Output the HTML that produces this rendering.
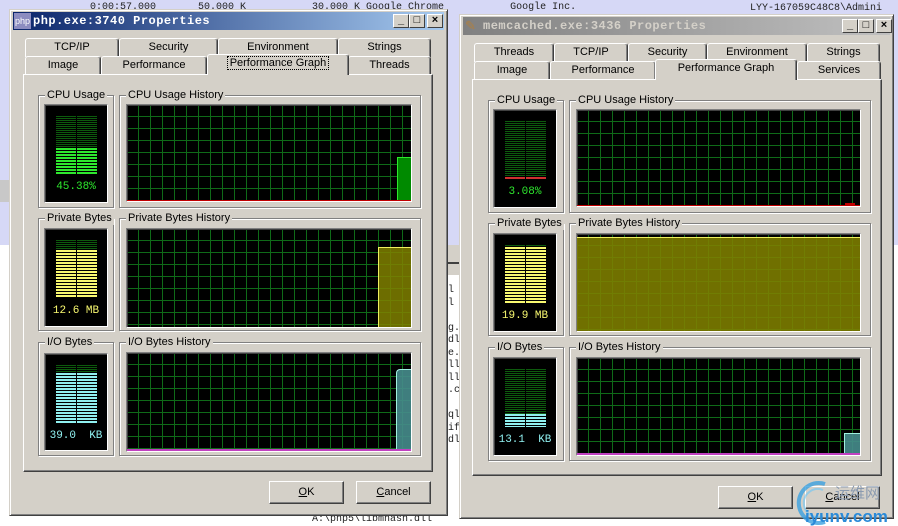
<!DOCTYPE html>
<html><head><meta charset="utf-8">
<style>
*{box-sizing:border-box;margin:0;padding:0}
body{width:898px;height:526px;position:relative;overflow:hidden;background:#fff;font-family:"Liberation Sans",sans-serif;font-size:11px;color:#000}
.a{position:absolute}
.win{position:absolute;background:#d4d0c8;border:1px solid;border-color:#d4d0c8 #404040 #404040 #d4d0c8;box-shadow:inset 1px 1px #fff,inset -1px -1px #808080}
.title{position:absolute;height:18px;color:#fff;font-family:"Liberation Mono",monospace;font-weight:bold;font-size:12px;line-height:18px;padding-left:20px;letter-spacing:0.5px}
.cb{position:absolute;top:2px;width:16px;height:14px;background:#d4d0c8;border:1px solid;border-color:#fff #404040 #404040 #fff;color:#000;font-size:11px;line-height:11px;text-align:center;font-family:"Liberation Sans",sans-serif;font-weight:bold}
.tab{position:absolute;height:19px;border:1px solid;border-bottom:none;border-color:#fff #404040 #fff #fff;box-shadow:inset -1px 0 #808080;border-radius:3px 3px 0 0;text-align:center;line-height:17px;background:#d4d0c8}
.panel{position:absolute;border:1px solid;border-color:#fff #404040 #404040 #fff;box-shadow:inset -1px -1px #808080}
.grp{position:absolute;border:1px solid #808080;box-shadow:1px 1px #fff,inset 1px 1px #fff}
.lg{position:absolute;top:-8px;left:6px;background:#d4d0c8;padding:0 2px;line-height:14px;white-space:nowrap}
.graph{position:absolute;background-color:#000;background-image:linear-gradient(#0f6a18 1px,transparent 1px),linear-gradient(90deg,#0f6a18 1px,transparent 1px);background-size:12px 12px;background-position:-1px -1px;border:1px solid;border-color:#808080 #fff #fff #808080;box-shadow:inset 1px 1px #404040;overflow:hidden}
.meter{position:absolute;background:#000;border:1px solid;border-color:#808080 #fff #fff #808080;box-shadow:inset 1px 1px #404040;overflow:hidden}
.bars{position:absolute;left:11px;top:11px;width:41px;height:58px;background:repeating-linear-gradient(#0d5a0d 0 1px,#000 1px 2px)}
.fill{position:absolute;left:0;right:0;bottom:0}
.div{position:absolute;left:20px;top:0;bottom:0;width:1px;background:#000}
.mt{position:absolute;left:0;right:0;top:76px;text-align:center;font-family:"Liberation Mono",monospace;font-size:11px}
.btn{position:absolute;height:23px;border:1px solid;border-color:#fff #404040 #404040 #fff;box-shadow:inset -1px -1px #808080;text-align:center;line-height:20px;background:#d4d0c8}
.hf{position:absolute;bottom:0}
.bg{position:absolute;font-family:"Liberation Mono",monospace;font-size:10px;color:#222}
</style></head><body>

<div class="a" style="left:0;top:0;width:898px;height:245px;background:#d6d8f6"></div>
<div class="a" style="left:0;top:180px;width:10px;height:22px;background:#c8c8c8"></div>
<div class="a" style="left:447px;top:245px;width:14px;height:30px;background:#d4d0c8"></div>
<div class="a" style="left:447px;top:262px;width:14px;height:2px;background:#404040"></div>
<div class="bg" style="left:90px;top:2px">0:00:57.000 &nbsp;&nbsp;&nbsp;&nbsp;&nbsp;&nbsp;50.000 K &nbsp;&nbsp;&nbsp;&nbsp;&nbsp;&nbsp;&nbsp;&nbsp;&nbsp;&nbsp;30.000 K Google Chrome &nbsp;&nbsp;&nbsp;&nbsp;&nbsp;&nbsp;&nbsp;&nbsp;&nbsp;&nbsp;Google Inc.</div>
<div class="bg" style="left:750px;top:3px">LYY-167059C48C8\Admini</div>
<div class="bg" style="left:448px;top:285px;line-height:12.5px">l<br>l<br><br>g.<br>dl<br>e.<br>ll<br>ll<br>.c<br><br>ql<br>if<br>dl</div>
<div class="bg" style="left:312px;top:514px">A:\php5\libmhash.dll</div>

<div class="win" style="left:9px;top:9px;width:439px;height:507px"></div>
<div class="title" style="left:13px;top:12px;width:431px;background:linear-gradient(90deg,#0a246a,#a6caf0)">php.exe:3740 Properties</div>
<div class="a" style="left:14px;top:13px;width:17px;height:16px;background:#8c8cc0;color:#fff;font-size:9px;line-height:16px;text-align:center">php</div>
<div class="cb" style="left:393px;top:14px">_</div>
<div class="cb" style="left:409px;top:14px">□</div>
<div class="cb" style="left:427px;top:14px">×</div>

<div class="tab" style="left:25px;top:38px;width:94px">TCP/IP</div>
<div class="tab" style="left:119px;top:38px;width:99px">Security</div>
<div class="tab" style="left:218px;top:38px;width:120px">Environment</div>
<div class="tab" style="left:338px;top:38px;width:93px">Strings</div>
<div class="tab" style="left:25px;top:56px;width:76px">Image</div>
<div class="tab" style="left:101px;top:56px;width:106px">Performance</div>
<div class="tab" style="left:348px;top:56px;width:83px">Threads</div>
<div class="panel" style="left:23px;top:74px;width:410px;height:398px"></div>
<div class="tab" style="left:207px;top:54px;width:142px;height:21px;z-index:2;border-bottom:none"><span style="outline:1px dotted #000;padding:0 2px">Performance Graph</span></div>

<div class="grp" style="left:38px;top:95px;width:76px;height:113px"><span class="lg">CPU Usage</span></div>
<div class="grp" style="left:119px;top:95px;width:302px;height:113px"><span class="lg">CPU Usage History</span></div>
<div class="meter" style="left:44px;top:104px;width:64px;height:99px"><div class="bars"><div class="fill" style="height:26px;background:repeating-linear-gradient(#2ee82e 0 2px,#000 2px 3px)"></div><div class="div"></div></div><div class="mt" style="color:#2ee82e">45.38%</div></div>
<div class="graph" style="left:126px;top:104px;width:286px;height:98px"><div class="hf" style="left:270px;width:14px;height:44px;background:#008a00;border-left:1px solid #2ee82e;border-top:1px solid #2ee82e"></div><div class="hf" style="left:0;right:0;height:1px;background:#c00000"></div></div>

<div class="grp" style="left:38px;top:218px;width:76px;height:113px"><span class="lg">Private Bytes</span></div>
<div class="grp" style="left:119px;top:218px;width:302px;height:113px"><span class="lg">Private Bytes History</span></div>
<div class="meter" style="left:44px;top:228px;width:64px;height:99px"><div class="bars"><div class="fill" style="height:48px;background:repeating-linear-gradient(#f8f870 0 2px,#000 2px 3px)"></div><div class="div"></div></div><div class="mt" style="color:#f8f870">12.6 MB</div></div>
<div class="graph" style="left:126px;top:228px;width:286px;height:100px"><div class="hf" style="left:251px;width:33px;height:80px;background:rgba(128,128,0,.85);border-left:1px solid #f0f060;border-top:1px solid #f0f060"></div></div>

<div class="grp" style="left:38px;top:342px;width:76px;height:114px"><span class="lg">I/O Bytes</span></div>
<div class="grp" style="left:119px;top:342px;width:302px;height:114px"><span class="lg">I/O Bytes History</span></div>
<div class="meter" style="left:44px;top:353px;width:64px;height:98px"><div class="bars"><div class="fill" style="height:50px;background:repeating-linear-gradient(#90f0f0 0 2px,#000 2px 3px)"></div><div class="div"></div></div><div class="mt" style="color:#90f0f0">39.0 &nbsp;KB</div></div>
<div class="graph" style="left:126px;top:352px;width:286px;height:100px"><div class="hf" style="left:269px;width:15px;height:82px;background:rgba(70,140,140,.9);border-left:1px solid #a0f0e0;border-top:1px solid #a0f0e0;border-radius:4px 0 0 0"></div><div class="hf" style="left:0;right:0;height:2px;background:#c040c0"></div></div>

<div class="btn" style="left:269px;top:481px;width:75px"><u>O</u>K</div>
<div class="btn" style="left:356px;top:481px;width:75px"><u>C</u>ancel</div>

<div class="win" style="left:459px;top:14px;width:435px;height:505px"></div>
<div class="title" style="left:463px;top:17px;width:427px;background:linear-gradient(90deg,#808080,#c0c0c0);color:#d4d0c8">memcached.exe:3436 Properties</div>
<div class="a" style="left:465px;top:18px;width:14px;height:15px;color:#b08040;font-size:13px;line-height:15px">✎</div>
<div class="cb" style="left:842px;top:19px">_</div>
<div class="cb" style="left:858px;top:19px">□</div>
<div class="cb" style="left:876px;top:19px">×</div>

<div class="tab" style="left:474px;top:43px;width:80px">Threads</div>
<div class="tab" style="left:554px;top:43px;width:74px">TCP/IP</div>
<div class="tab" style="left:628px;top:43px;width:79px">Security</div>
<div class="tab" style="left:707px;top:43px;width:100px">Environment</div>
<div class="tab" style="left:807px;top:43px;width:73px">Strings</div>
<div class="tab" style="left:474px;top:61px;width:76px">Image</div>
<div class="tab" style="left:550px;top:61px;width:106px">Performance</div>
<div class="tab" style="left:797px;top:61px;width:84px">Services</div>
<div class="panel" style="left:472px;top:79px;width:410px;height:397px"></div>
<div class="tab" style="left:655px;top:59px;width:142px;height:21px;z-index:2">Performance Graph</div>

<div class="grp" style="left:488px;top:100px;width:76px;height:113px"><span class="lg">CPU Usage</span></div>
<div class="grp" style="left:569px;top:100px;width:302px;height:113px"><span class="lg">CPU Usage History</span></div>
<div class="meter" style="left:493px;top:109px;width:64px;height:99px"><div class="bars"><div class="fill" style="height:2px;background:#d03030"></div><div class="div"></div></div><div class="mt" style="color:#2ee82e">3.08%</div></div>
<div class="graph" style="left:576px;top:109px;width:285px;height:98px"><div class="hf" style="left:0;right:0;height:1px;background:#c00000"></div><div class="hf" style="left:268px;width:10px;height:3px;background:#c00000"></div></div>

<div class="grp" style="left:488px;top:223px;width:76px;height:113px"><span class="lg">Private Bytes</span></div>
<div class="grp" style="left:569px;top:223px;width:302px;height:113px"><span class="lg">Private Bytes History</span></div>
<div class="meter" style="left:493px;top:233px;width:64px;height:99px"><div class="bars"><div class="fill" style="height:56px;background:repeating-linear-gradient(#f8f870 0 2px,#000 2px 3px)"></div><div class="div"></div></div><div class="mt" style="color:#f8f870">19.9 MB</div></div>
<div class="graph" style="left:576px;top:233px;width:285px;height:99px"><div class="hf" style="left:0;right:0;height:94px;background:rgba(128,128,0,.88);border-top:1px solid #f0f060"></div></div>

<div class="grp" style="left:488px;top:347px;width:76px;height:114px"><span class="lg">I/O Bytes</span></div>
<div class="grp" style="left:569px;top:347px;width:302px;height:114px"><span class="lg">I/O Bytes History</span></div>
<div class="meter" style="left:493px;top:357px;width:64px;height:99px"><div class="bars"><div class="fill" style="height:13px;background:repeating-linear-gradient(#90f0f0 0 2px,#000 2px 3px)"></div><div class="div"></div></div><div class="mt" style="color:#90f0f0">13.1 &nbsp;KB</div></div>
<div class="graph" style="left:576px;top:357px;width:285px;height:99px"><div class="hf" style="left:267px;width:16px;height:22px;background:rgba(70,140,140,.9);border-left:1px solid #a0f0e0;border-top:1px solid #a0f0e0"></div><div class="hf" style="left:0;right:0;height:2px;background:#c040c0"></div></div>

<div class="btn" style="left:718px;top:486px;width:75px"><u>O</u>K</div>
<div class="btn" style="left:805px;top:486px;width:75px"><u>C</u>ancel</div>

<svg class="a" style="left:795px;top:478px" width="103" height="48">
<path d="M30 6 A20 20 0 1 0 30 44" fill="none" stroke="#3aa0e0" stroke-width="4" opacity=".8"/>
<path d="M28 12 A14 14 0 1 0 28 38" fill="none" stroke="#7ac8f0" stroke-width="2" opacity=".7"/>
<text x="40" y="20" font-family="Noto Sans CJK SC,sans-serif" font-size="15" fill="#8a9ab0">运维网</text>
<text x="10" y="44" font-family="Liberation Sans,sans-serif" font-size="17" font-weight="bold" fill="#2a8ad8">iyunv.com</text>
</svg>
</body></html>
